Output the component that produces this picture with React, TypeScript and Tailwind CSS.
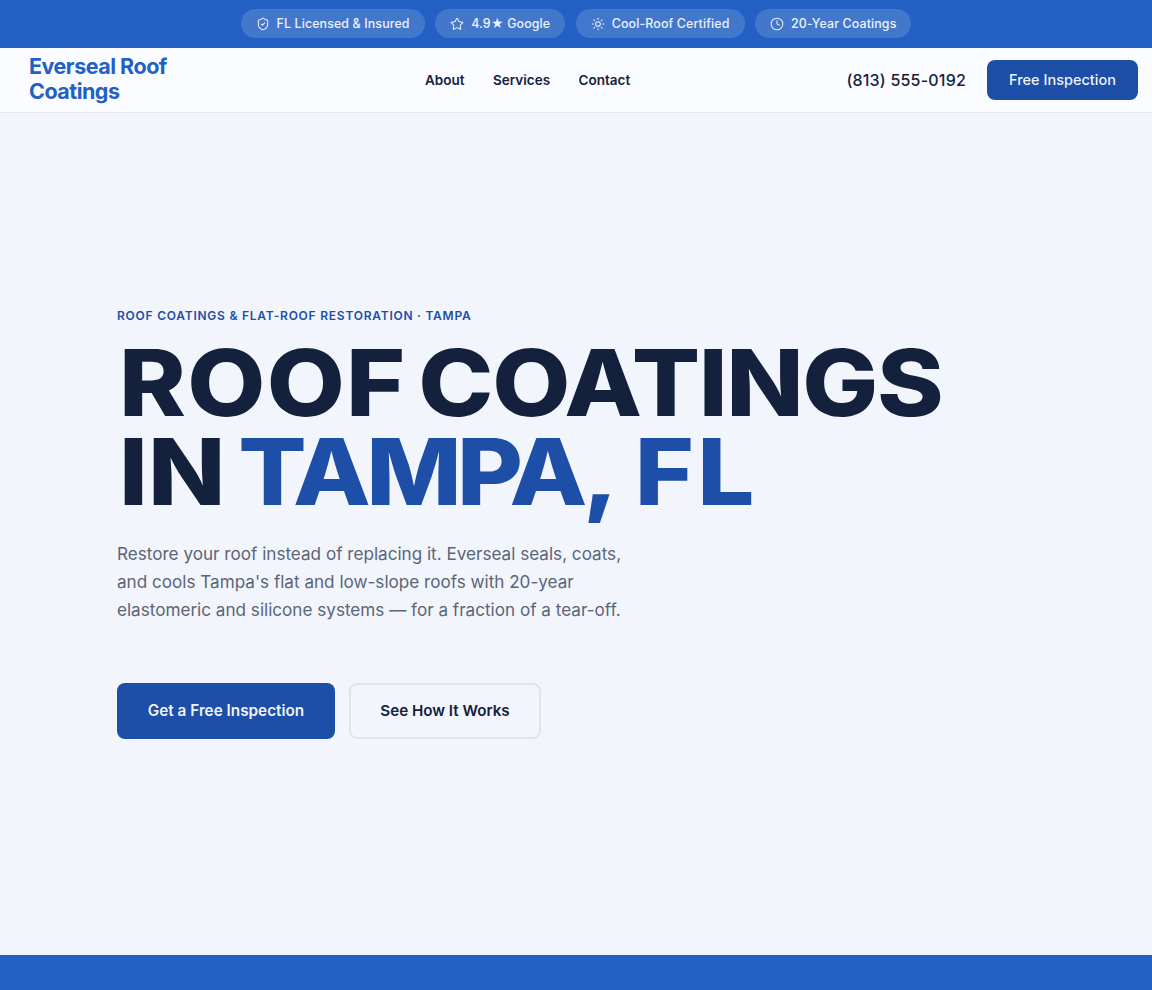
import React from "react";
import { ShieldCheck, Star, Sun, Clock } from "lucide-react";

const font = { fontFamily: "Inter, sans-serif" };

function Pill({ icon, text }: { icon: React.ReactNode; text: string }) {
  return (
    <div className="flex items-center gap-[7px] h-[29px] px-[15px] rounded-full bg-white/15 text-[12.4px] font-medium text-white/90 tracking-[0.13px] whitespace-nowrap">
      {icon}
      <span className="pt-[2px]">{text}</span>
    </div>
  );
}

export default function App() {
  return (
    <div className="flex flex-col h-[990px] overflow-hidden bg-[#f2f5fc]" style={font}>
      <div className="flex items-center justify-center gap-[10.5px] h-[48px] pb-[1px] shrink-0 bg-[#2260c4]">
        <Pill icon={<ShieldCheck size={14} strokeWidth={1.75} />} text="FL Licensed & Insured" />
        <Pill icon={<Star size={14} strokeWidth={1.75} />} text="4.9★ Google" />
        <Pill icon={<Sun size={14} strokeWidth={1.75} />} text="Cool-Roof Certified" />
        <Pill icon={<Clock size={14} strokeWidth={1.75} />} text="20-Year Coatings" />
      </div>
      <header className="flex items-center h-[65px] shrink-0 pl-[29px] pr-[14px] bg-[#fbfcff] border-b border-[#e3e7ee]">
        <div className="w-[160px] mb-[2px] text-[21.5px] leading-[25px] font-bold tracking-[-0.5px] text-[#2260c4]">Everseal Roof Coatings</div>
        <nav className="flex items-center gap-[28.5px] ml-[236px] text-[13.5px] font-semibold text-[#14213d]">
          <span>About</span>
          <span>Services</span>
          <span>Contact</span>
        </nav>
        <div className="ml-auto flex items-center gap-[21px]">
          <span className="text-[16px] font-medium tracking-[0.2px] text-[#14213d]">(813) 555-0192</span>
          <button className="w-[151px] h-[40px] rounded-[8px] bg-[#1e4fa8] text-[14.5px] font-medium text-white/95">Free Inspection</button>
        </div>
      </header>
      <main className="flex-1 flex flex-col justify-center pl-[117px] pb-[22px]">
        <p className="text-[12px] font-semibold tracking-[0.76px] text-[#1e4fa8]">ROOF COATINGS &amp; FLAT-ROOF RESTORATION · TAMPA</p>
        <h1 className="mt-[13px] ml-[2px] origin-left scale-x-110 text-[92px] leading-[89px] font-[840] text-[#14213d] whitespace-nowrap">
          <span className="tracking-[1.1px] [word-spacing:-10.5px]">ROOF </span>
          <span className="tracking-[-1.3px]">COATINGS</span>
          <br />
          <span className="[word-spacing:-8.5px]">IN </span>
          <span className="text-[#1e4fa8] tracking-[-4.2px] [word-spacing:7px]">TAMPA, </span>
          <span className="text-[#1e4fa8] tracking-[3px]">FL</span>
        </h1>
        <p className="mt-[24px] w-[520px] text-[17.12px] leading-[28px] text-[#5a6578]">
          Restore your roof instead of replacing it. Everseal seals, coats, and cools Tampa's flat and low-slope roofs with 20-year elastomeric and silicone systems — for a fraction of a tear-off.
        </p>
        <div className="mt-[59px] flex gap-[14px]">
          <button className="w-[218px] h-[56px] rounded-[8px] bg-[#1e4fa8] text-[15.3px] font-semibold text-white/95">Get a Free Inspection</button>
          <button className="w-[192px] h-[56px] rounded-[8px] border-2 border-[#dde5f2] text-[15.2px] font-semibold text-[#14213d]">See How It Works</button>
        </div>
      </main>
      <div className="h-[35px] shrink-0 bg-[#2260c4]" />
    </div>
  );
}
